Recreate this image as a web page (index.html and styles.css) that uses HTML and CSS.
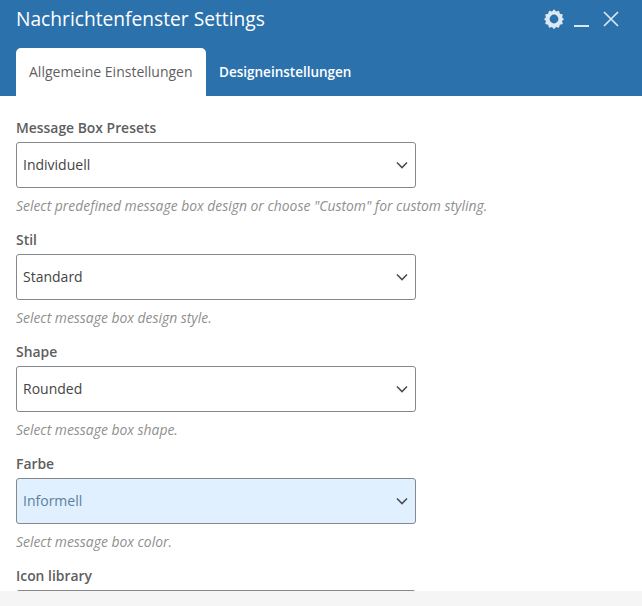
FILE: index.html
```html
<!DOCTYPE html>
<html lang="en">
<head>
    <meta charset="UTF-8">
    <meta name="viewport" content="width=device-width, initial-scale=1.0">
    <title>Nachrichtenfenster Settings</title>
    <link rel="stylesheet" href="styles.css">
</head>
<body>
    <div class="modal">
        <div class="modal-header">
            <div class="title-row">
                <h1>Nachrichtenfenster Settings</h1>
                <div class="window-icons">
                    <svg class="icon-gear" width="20" height="20" viewBox="0 0 20 20">
                        <path fill-rule="evenodd" d="M10 0.3l2 2.2 2.9-.7 1 2.9 2.9 .9-.7 2.9 2 1.5-2 2 .7 2.9-2.9 .9-1 2.9-2.9-.7-2 2.2-2-2.2-2.9 .7-1-2.9-2.9-.9 .7-2.9-2-2 2-1.5-.7-2.9 2.9-.9 1-2.9 2.9 .7z M10 5.6a4.4 4.4 0 1 0 0 8.8a4.4 4.4 0 1 0 0-8.8z"/>
                    </svg>
                    <span class="icon-min"></span>
                    <svg class="icon-close" width="16" height="16" viewBox="0 0 16 16">
                        <path d="M1 1L15 15M15 1L1 15"/>
                    </svg>
                </div>
            </div>
            <div class="tabs">
                <div class="tab active">Allgemeine Einstellungen</div>
                <div class="tab">Designeinstellungen</div>
            </div>
        </div>

        <div class="modal-body">
            <div class="field">
                <div class="field-label">Message Box Presets</div>
                <div class="select"><span class="select-value">Individuell</span>
                    <svg class="chevron" width="12" height="8" viewBox="0 0 12 8"><path d="M1 1.5L6 6.5L11 1.5"/></svg>
                </div>
                <div class="field-help">Select predefined message box design or choose "Custom" for custom styling.</div>
            </div>
            <div class="field">
                <div class="field-label">Stil</div>
                <div class="select"><span class="select-value">Standard</span>
                    <svg class="chevron" width="12" height="8" viewBox="0 0 12 8"><path d="M1 1.5L6 6.5L11 1.5"/></svg>
                </div>
                <div class="field-help">Select message box design style.</div>
            </div>
            <div class="field">
                <div class="field-label">Shape</div>
                <div class="select"><span class="select-value">Rounded</span>
                    <svg class="chevron" width="12" height="8" viewBox="0 0 12 8"><path d="M1 1.5L6 6.5L11 1.5"/></svg>
                </div>
                <div class="field-help">Select message box shape.</div>
            </div>
            <div class="field">
                <div class="field-label">Farbe</div>
                <div class="select select-info"><span class="select-value">Informell</span>
                    <svg class="chevron" width="12" height="8" viewBox="0 0 12 8"><path d="M1 1.5L6 6.5L11 1.5"/></svg>
                </div>
                <div class="field-help">Select message box color.</div>
            </div>
            <div class="field">
                <div class="field-label">Icon library</div>
                <div class="select"></div>
            </div>
        </div>
        <div class="modal-footer"></div>
    </div>
</body>
</html>
```

FILE: styles.css
```css
html, body {
    margin: 0;
    height: 100%;
    overflow: hidden;
}

body {
    background: #fff;
    color: #5e5e5e;
    font-family: "Open Sans", "Noto Sans", sans-serif;
}

.modal {
    width: 642px;
    height: 606px;
    display: flex;
    flex-direction: column;
}

.modal-header {
    height: 96px;
    box-sizing: border-box;
    padding: 0 16px;
    background: #2b71ac;
    color: #fff;
    display: flex;
    flex-direction: column;
    justify-content: space-between;
    flex: none;
}

.title-row {
    display: flex;
    justify-content: space-between;
    align-items: center;
    padding-top: 5px;
}

h1 {
    margin: 0;
    font-size: 19.2px;
    line-height: 28px;
    font-weight: 400;
}

.window-icons {
    display: flex;
    align-items: center;
    gap: 10px;
    margin-right: 7px;
}

.icon-gear {
    fill: #dce9f4;
}

.icon-min {
    width: 15px;
    height: 2px;
    margin-top: 13px;
    background: #dce9f4;
}

.icon-close {
    margin-left: 4px;
    fill: none;
    stroke: #dce9f4;
    stroke-width: 1.7;
}

.tabs {
    display: flex;
}

.tab {
    padding: 0 13.5px 0 13px;
    line-height: 48px;
    font-size: 13.5px;
    font-weight: 600;
    white-space: nowrap;
}

.tab.active {
    background: #fff;
    color: #5f5f5f;
    font-size: 14px;
    font-weight: 400;
    border-radius: 5px 5px 0 0;
}

.modal-body {
    flex: 1;
    min-height: 0;
    overflow: hidden;
    padding: 23px 16px 0;
}

.field {
    width: 400px;
    height: 112px;
}

.field-label {
    font-size: 13.9px;
    line-height: 18px;
    font-weight: 600;
    margin-bottom: 5px;
    white-space: nowrap;
}

.select {
    height: 46px;
    box-sizing: border-box;
    padding: 0 6px;
    border: 1px solid #85888c;
    border-radius: 3px;
    background: #fff;
    color: #444;
    font-size: 14px;
    display: flex;
    align-items: center;
    justify-content: space-between;
}

.select-value {
    margin-bottom: 2px;
}

.select-info {
    background: #e0f0fe;
    color: #5a7f9f;
}

.chevron {
    margin-right: 1px;
    fill: none;
    stroke: #4d4d4d;
    stroke-width: 1.6;
}

.field-help {
    margin-top: 8px;
    font-size: 13.9px;
    line-height: 19px;
    font-style: italic;
    color: #8f8f8f;
    white-space: nowrap;
}

.modal-footer {
    height: 15px;
    background: #f5f5f5;
    flex: none;
}
```
